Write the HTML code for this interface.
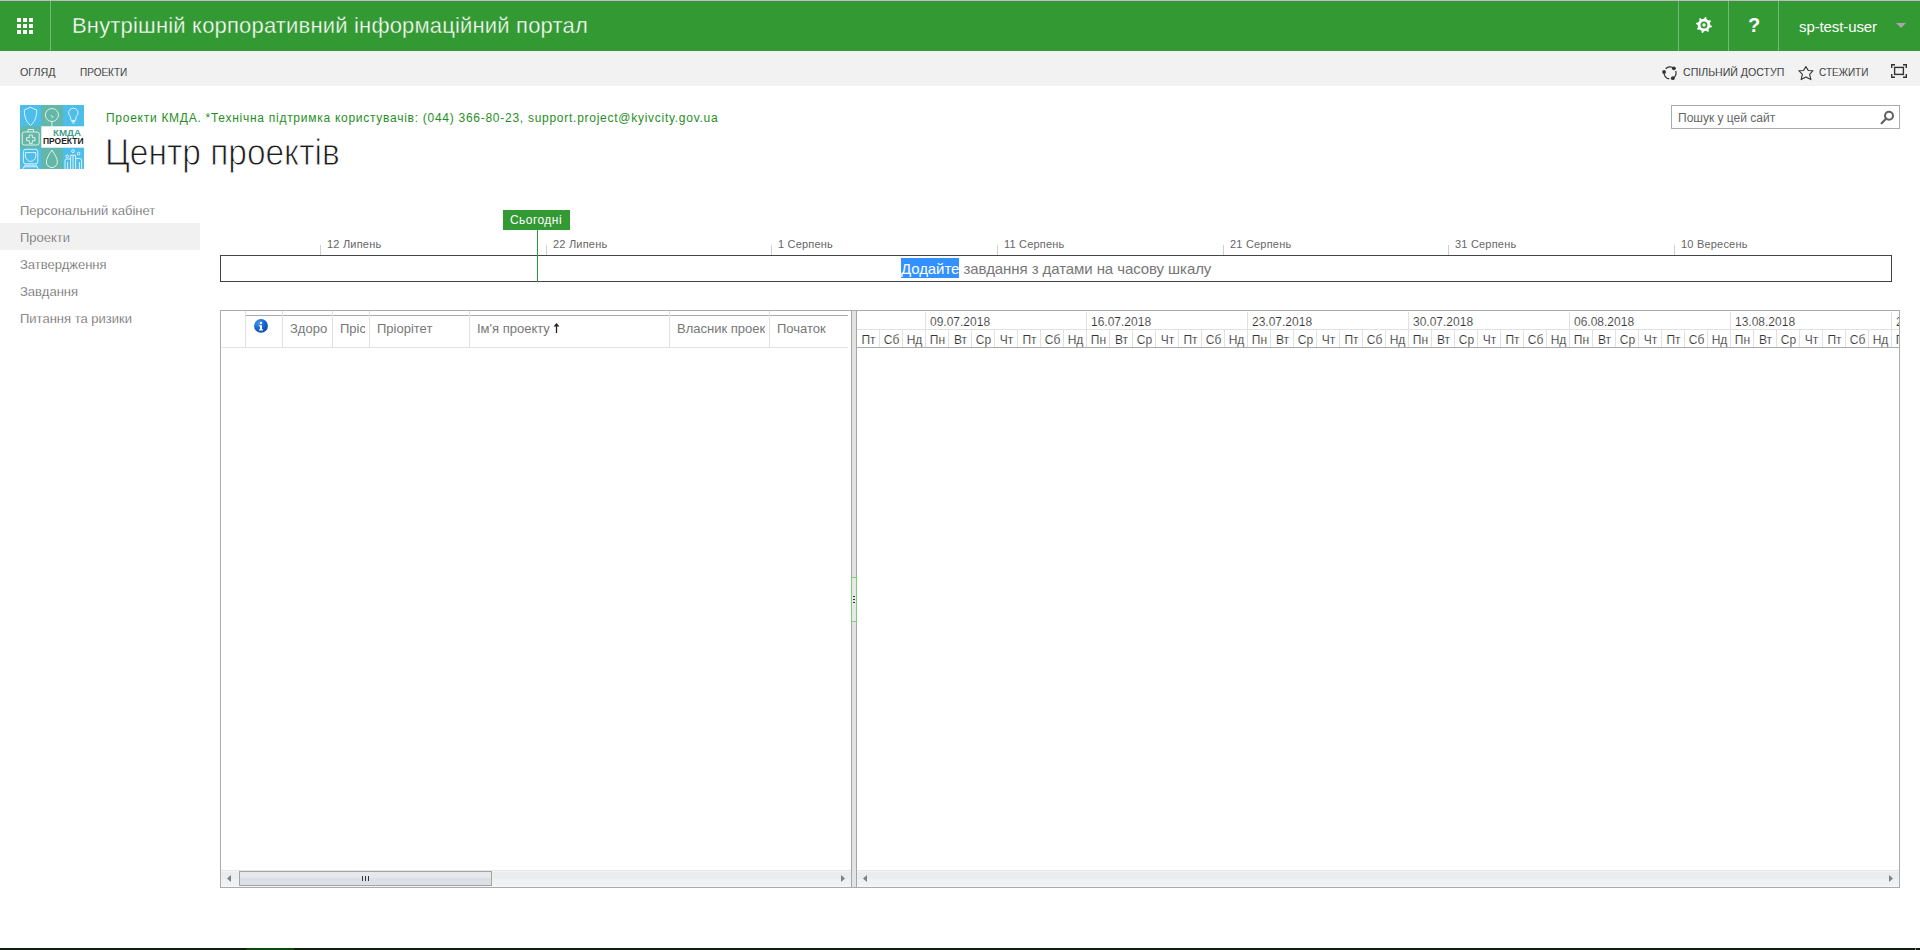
<!DOCTYPE html>
<html><head><meta charset="utf-8">
<style>
*{box-sizing:border-box;margin:0;padding:0}
html,body{width:1920px;height:950px;overflow:hidden;background:#fff;font-family:"Liberation Sans",sans-serif;position:relative}
.a{position:absolute;white-space:nowrap}
#topline{left:0;top:0;width:1920px;height:1px;background:#c3bac6}
#suite{left:0;top:1px;width:1920px;height:50px;background:#339933}
.sep{top:1px;width:1px;height:50px;background:#73b873}
.wf{width:4px;height:4px;background:#fff}
#nav{left:0;top:51px;width:1920px;height:35px;background:#f2f2f2}
.cap{font-size:11.5px;color:#222;transform-origin:0 0;-webkit-text-stroke:.12px #f2f2f2}
.ql{font-size:13px;color:#555;left:20px;-webkit-text-stroke:.25px #fff}
.tl-lbl{font-size:11px;color:#666;top:238px;letter-spacing:.2px}
.tick{width:1px;height:10px;background:#cfcfcf;top:245px}
.hdr{font-size:13px;color:#777;top:321px}
.csep{width:1px;background:#e1e1e1;top:311px;height:37px}
.dsep{width:1px;background:#e1e1e1;top:330px;height:17px}
.wsep{width:1px;background:#e1e1e1;top:312px;height:18px}
.day{font-size:12px;color:#333;top:333px;width:23px;text-align:center;margin-left:1px;-webkit-text-stroke:.15px #fff}
.wk{font-size:12px;color:#333;top:315px;-webkit-text-stroke:.15px #fff}
</style></head><body>
<div class="a" id="topline"></div>
<div class="a" id="suite"></div>
<!-- waffle -->
<div class="a wf" style="left:17px;top:18px"></div><div class="a wf" style="left:23px;top:18px"></div><div class="a wf" style="left:29px;top:18px"></div>
<div class="a wf" style="left:17px;top:24px"></div><div class="a wf" style="left:23px;top:24px"></div><div class="a wf" style="left:29px;top:24px"></div>
<div class="a wf" style="left:17px;top:30px"></div><div class="a wf" style="left:23px;top:30px"></div><div class="a wf" style="left:29px;top:30px"></div>
<div class="a sep" style="left:50px"></div>
<div class="a" style="left:72px;top:13px;font-size:22px;color:#fff;letter-spacing:.18px;-webkit-text-stroke:.35px #339933">Внутрішній корпоративний інформаційний портал</div>
<div class="a sep" style="left:1678px"></div>
<div class="a sep" style="left:1728px"></div>
<div class="a sep" style="left:1778px"></div>
<!-- gear -->
<svg class="a" style="left:1696px;top:17px" width="16" height="16" viewBox="0 0 16 16">
<path fill="#fff" d="M14.30 8.08 L15.93 9.04 L15.67 10.27 L13.79 10.49 L12.40 12.51 L12.87 14.35 L11.82 15.03 L10.33 13.85 L7.92 14.30 L6.96 15.93 L5.73 15.67 L5.51 13.79 L3.49 12.40 L1.65 12.87 L0.97 11.82 L2.15 10.33 L1.70 7.92 L0.07 6.96 L0.33 5.73 L2.21 5.51 L3.60 3.49 L3.13 1.65 L4.18 0.97 L5.67 2.15 L8.08 1.70 L9.04 0.07 L10.27 0.33 L10.49 2.21 L12.51 3.60 L14.35 3.13 L15.03 4.18 L13.85 5.67Z"/><circle cx="8" cy="8" r="2.6" fill="none" stroke="#339933" stroke-width="1.8"/>
</svg>
<div class="a" style="left:1748px;top:14px;font-size:20px;font-weight:bold;color:#fff">?</div>
<div class="a" style="left:1799px;top:18px;font-size:15px;color:#fff;letter-spacing:-.1px">sp-test-user</div>
<svg class="a" style="left:1896px;top:23px" width="10" height="5" viewBox="0 0 10 5"><path d="M0 0h10L5 5z" fill="#aaa6ac"/></svg>

<div class="a" id="nav"></div>
<div class="a cap" style="left:20px;top:66px;transform:scaleX(.93)">ОГЛЯД</div>
<div class="a cap" style="left:80px;top:66px;transform:scaleX(.87)">ПРОЕКТИ</div>
<!-- share icon -->
<svg class="a" style="left:1662px;top:65px" width="16" height="16" viewBox="0 0 16 16">
<path d="M7.27 13.86A6.0 6.0 0 0 1 2.07 6.96 M3.68 3.73A6.0 6.0 0 0 1 11.86 3.30 M13.71 6.05A6.0 6.0 0 0 1 10.82 13.20" fill="none" stroke="#333" stroke-width="1.2"/><circle cx="10.82" cy="13.20" r="1.9" fill="#333"/><circle cx="2.07" cy="6.96" r="1.9" fill="#333"/><circle cx="11.86" cy="3.30" r="1.9" fill="#333"/>
</svg>
<div class="a cap" style="left:1683px;top:66px;transform:scaleX(.92)">СПІЛЬНИЙ ДОСТУП</div>
<svg class="a" style="left:1797px;top:65px" width="18" height="17" viewBox="0 0 18 17">
<path d="M8.9 1.6L11.3 5.5L16 5.7L12.6 9.4L13.9 14.6L8.9 12L4.1 14.6L5.4 9.4L1.8 5.7L6.5 5.5Z" fill="none" stroke="#333" stroke-width="1.1" stroke-linejoin="round"/>
</svg>
<div class="a cap" style="left:1819px;top:66px;transform:scaleX(.87)">СТЕЖИТИ</div>
<svg class="a" style="left:1890px;top:63px" width="18" height="16" viewBox="0 0 18 16">
<g fill="none" stroke="#333" stroke-width="1.4"><path d="M1.7 5V1.7H5M13 1.7h3.3V5M16.3 11v3.3H13M5 14.3H1.7V11"/><rect x="4.6" y="4.4" width="8.8" height="7"/></g>
</svg>

<!-- logo -->
<svg class="a" style="left:20px;top:105px" width="64" height="64" viewBox="0 0 64 64">
<rect x="0" y="0" width="64" height="64" fill="#4dbde9"/>
<rect x="21.3" y="0" width="21.4" height="21.3" fill="#62b7a6"/>
<rect x="0" y="21.3" width="21.3" height="21.4" fill="#62b7a6"/>
<rect x="21.3" y="42.7" width="21.4" height="21.3" fill="#62b7a6"/>
<rect x="21.3" y="21.3" width="42.7" height="21.4" fill="#fff"/>
<g fill="none" stroke="#fff" stroke-width=".8">
<path d="M10.5 2.3l6.2 2.7c0 7-2 12-6.2 15.4C6.3 17 4.3 12 4.3 5z"/>
<circle cx="31.9" cy="10" r="6.5"/><path d="M31.9 16.5v5M31.9 13l1.5-2M31.9 11.5l-1-1.5"/>
<path d="M53.3 3.2a4.6 4.6 0 0 1 3 8.2l-.8 4h-4.4l-.8-4a4.6 4.6 0 0 1 3-8.2zM51.5 16.5h3.6M51.8 18h3"/>
<rect x="2.2" y="27" width="17" height="13" rx="2"/><path d="M8 27v-2.5h5.5V27M9.3 30h3v2.7h2.7v3h-2.7v2.7h-3v-2.7H6.6v-3h2.7z"/>
<path d="M6 44.3h9.6a2.4 2.4 0 0 1 2.2 2.2v10.3a2 2 0 0 1-2 2H5.4a2 2 0 0 1-2-2V46.5a2.4 2.4 0 0 1 2.6-2.2zM5.4 47.6h10.4v4.2c-1 2.6-2.8 4.6-5.2 4.6s-4.2-2-5.2-4.6zM4.2 60.2h12.8M3.6 61.8h14M2.6 64l1.8-2.4M18.6 64l-1.8-2.4"/>
<path d="M31.9 45c3 4.5 5.5 8.5 5.5 12a5.5 5.5 0 0 1-11 0c0-3.5 2.5-7.5 5.5-12z"/>
<circle cx="53" cy="46.2" r="1.4"/><circle cx="47.2" cy="51.3" r="1.3"/><circle cx="58.6" cy="48.6" r="1.3"/><path d="M50.6 64V50.2h5v13.8M45 64V55.8a1.8 1.8 0 0 1 1.8-1.8h3.8M56 53.5h3.8a1.8 1.8 0 0 1 1.8 1.8V64M53 50.2V64M47.6 57v7M59.4 57v7"/>
</g>
<text x="33" y="30.8" font-family="Liberation Sans" font-weight="bold" font-size="9.5" fill="#45a08e" textLength="28" lengthAdjust="spacingAndGlyphs">КМДА</text>
<text x="23" y="39.2" font-family="Liberation Sans" font-weight="bold" font-size="8.4" fill="#222" textLength="40.5" lengthAdjust="spacingAndGlyphs">ПРОЕКТИ</text>
</svg>
<div class="a" style="left:106px;top:111px;font-size:12px;color:#1f8f1f;letter-spacing:.73px">Проекти КМДА. *Технічна підтримка користувачів: (044) 366-80-23, support.project@kyivcity.gov.ua</div>
<div class="a" style="left:105px;top:132px;font-size:36px;color:#1a1a1a;-webkit-text-stroke:.9px #fff;transform-origin:0 0;transform:scaleX(.93)">Центр проектів</div>
<!-- search -->
<div class="a" style="left:1671px;top:105px;width:229px;height:24px;border:1px solid #ababab;background:#fff"></div>
<div class="a" style="left:1678px;top:111px;font-size:12px;color:#666">Пошук у цей сайт</div>
<svg class="a" style="left:1880px;top:110px" width="15" height="15" viewBox="0 0 15 15">
<circle cx="9" cy="5.7" r="4" fill="none" stroke="#606060" stroke-width="2"/><path d="M6.3 8.5L1.6 13.2" stroke="#606060" stroke-width="2.2" stroke-linecap="round"/>
</svg>
<!-- quick launch -->
<div class="a" style="left:0;top:223px;width:200px;height:27px;background:#f1f1f1"></div>
<div class="a ql" style="top:203px">Персональний кабінет</div>
<div class="a ql" style="top:230px">Проекти</div>
<div class="a ql" style="top:257px">Затвердження</div>
<div class="a ql" style="top:284px">Завдання</div>
<div class="a ql" style="top:311px">Питання та ризики</div>

<!-- timeline -->
<div class="a tick" style="left:320px"></div><div class="a tl-lbl" style="left:327px">12 Липень</div>
<div class="a tick" style="left:546px"></div><div class="a tl-lbl" style="left:553px">22 Липень</div>
<div class="a tick" style="left:771px"></div><div class="a tl-lbl" style="left:778px">1 Серпень</div>
<div class="a tick" style="left:997px"></div><div class="a tl-lbl" style="left:1004px">11 Серпень</div>
<div class="a tick" style="left:1223px"></div><div class="a tl-lbl" style="left:1230px">21 Серпень</div>
<div class="a tick" style="left:1448px"></div><div class="a tl-lbl" style="left:1455px">31 Серпень</div>
<div class="a tick" style="left:1674px"></div><div class="a tl-lbl" style="left:1681px">10 Вересень</div>
<div class="a" style="left:220px;top:255px;width:1672px;height:27px;border:1px solid #444"></div>
<div class="a" style="left:503px;top:210px;width:67px;height:20px;background:#339933"></div>
<div class="a" style="left:510px;top:213px;font-size:12px;color:#fff;letter-spacing:.45px">Сьогодні</div>
<div class="a" style="left:537px;top:230px;width:1px;height:52px;background:#339933"></div>
<div class="a" style="left:901px;top:258px;width:58px;height:20px;background:#3390ff"></div>
<div class="a" style="left:901px;top:260px;font-size:15px;color:#777;letter-spacing:-.08px"><span style="color:#fff">Додайте</span> завдання з датами на часову шкалу</div>

<!-- grid -->
<div class="a" style="left:220px;top:310px;width:1680px;height:578px;border:1px solid #ababab"></div>
<div class="a" style="left:246px;top:315px;width:602px;height:1px;background:#a9a9a9"></div>
<div class="a" style="left:221px;top:347px;width:627px;height:1px;background:#e1e1e1"></div>
<div class="a csep" style="left:245px"></div><div class="a csep" style="left:282px"></div><div class="a csep" style="left:332px"></div><div class="a csep" style="left:369px"></div><div class="a csep" style="left:469px"></div><div class="a csep" style="left:669px"></div><div class="a csep" style="left:769px"></div>
<svg class="a" style="left:254px;top:319px" width="14" height="14" viewBox="0 0 14 14">
<defs><radialGradient id="ig" cx="35%" cy="30%" r="75%"><stop offset="0" stop-color="#4c96ea"/><stop offset=".55" stop-color="#1466d2"/><stop offset="1" stop-color="#0b4aa8"/></radialGradient></defs>
<circle cx="7" cy="6.9" r="6.9" fill="url(#ig)"/><rect x="6" y="2.9" width="2" height="2" fill="#fff"/><path d="M5 6.2h3v4.1h1v1.2H5v-1.2h1V7.3H5z" fill="#fff"/>
</svg>
<div class="a hdr" style="left:290px;width:38px;overflow:hidden">Здоровʼя</div>
<div class="a hdr" style="left:340px;width:25px;overflow:hidden">Прісвоєно</div>
<div class="a hdr" style="left:377px">Пріорітет</div>
<div class="a hdr" style="left:477px">Ім'я проекту</div>
<svg class="a" style="left:553px;top:323px" width="7" height="10" viewBox="0 0 7 10"><path d="M3.5 1.5V10" stroke="#222" stroke-width="1.3"/><path d="M3.5 0L6.5 3.6H.5z" fill="#222"/></svg>
<div class="a hdr" style="left:677px;width:88px;overflow:hidden">Власник проекту</div>
<div class="a hdr" style="left:777px">Початок</div>
<!-- splitter -->
<div class="a" style="left:851px;top:311px;width:6px;height:576px;background:#e3e3e3;border-left:1px solid #a6a6a6;border-right:1px solid #a6a6a6"></div>
<div class="a" style="left:851px;top:577px;width:6px;height:45px;border:1px solid #78d178;background:#e8e8e8"></div>
<div class="a" style="left:853px;top:596px;width:2px;height:1px;background:#333"></div>
<div class="a" style="left:853px;top:599px;width:2px;height:1px;background:#333"></div>
<div class="a" style="left:853px;top:602px;width:2px;height:1px;background:#333"></div>
<!-- gantt header -->
<div class="a" style="left:857px;top:329px;width:1042px;height:1px;background:#e1e1e1"></div>
<div class="a" style="left:857px;top:347px;width:1042px;height:1px;background:#ababab"></div>
<div class="a day" style="left:856px">Пт</div><div class="a dsep" style="left:879px"></div><div class="a day" style="left:879px">Сб</div><div class="a dsep" style="left:902px"></div><div class="a day" style="left:902px">Нд</div><div class="a dsep" style="left:925px"></div><div class="a day" style="left:925px">Пн</div><div class="a dsep" style="left:948px"></div><div class="a day" style="left:948px">Вт</div><div class="a dsep" style="left:971px"></div><div class="a day" style="left:971px">Ср</div><div class="a dsep" style="left:994px"></div><div class="a day" style="left:994px">Чт</div><div class="a dsep" style="left:1017px"></div><div class="a day" style="left:1017px">Пт</div><div class="a dsep" style="left:1040px"></div><div class="a day" style="left:1040px">Сб</div><div class="a dsep" style="left:1063px"></div><div class="a day" style="left:1063px">Нд</div><div class="a dsep" style="left:1086px"></div><div class="a day" style="left:1086px">Пн</div><div class="a dsep" style="left:1109px"></div><div class="a day" style="left:1109px">Вт</div><div class="a dsep" style="left:1132px"></div><div class="a day" style="left:1132px">Ср</div><div class="a dsep" style="left:1155px"></div><div class="a day" style="left:1155px">Чт</div><div class="a dsep" style="left:1178px"></div><div class="a day" style="left:1178px">Пт</div><div class="a dsep" style="left:1201px"></div><div class="a day" style="left:1201px">Сб</div><div class="a dsep" style="left:1224px"></div><div class="a day" style="left:1224px">Нд</div><div class="a dsep" style="left:1247px"></div><div class="a day" style="left:1247px">Пн</div><div class="a dsep" style="left:1270px"></div><div class="a day" style="left:1270px">Вт</div><div class="a dsep" style="left:1293px"></div><div class="a day" style="left:1293px">Ср</div><div class="a dsep" style="left:1316px"></div><div class="a day" style="left:1316px">Чт</div><div class="a dsep" style="left:1339px"></div><div class="a day" style="left:1339px">Пт</div><div class="a dsep" style="left:1362px"></div><div class="a day" style="left:1362px">Сб</div><div class="a dsep" style="left:1385px"></div><div class="a day" style="left:1385px">Нд</div><div class="a dsep" style="left:1408px"></div><div class="a day" style="left:1408px">Пн</div><div class="a dsep" style="left:1431px"></div><div class="a day" style="left:1431px">Вт</div><div class="a dsep" style="left:1454px"></div><div class="a day" style="left:1454px">Ср</div><div class="a dsep" style="left:1477px"></div><div class="a day" style="left:1477px">Чт</div><div class="a dsep" style="left:1500px"></div><div class="a day" style="left:1500px">Пт</div><div class="a dsep" style="left:1523px"></div><div class="a day" style="left:1523px">Сб</div><div class="a dsep" style="left:1546px"></div><div class="a day" style="left:1546px">Нд</div><div class="a dsep" style="left:1569px"></div><div class="a day" style="left:1569px">Пн</div><div class="a dsep" style="left:1592px"></div><div class="a day" style="left:1592px">Вт</div><div class="a dsep" style="left:1615px"></div><div class="a day" style="left:1615px">Ср</div><div class="a dsep" style="left:1638px"></div><div class="a day" style="left:1638px">Чт</div><div class="a dsep" style="left:1661px"></div><div class="a day" style="left:1661px">Пт</div><div class="a dsep" style="left:1684px"></div><div class="a day" style="left:1684px">Сб</div><div class="a dsep" style="left:1707px"></div><div class="a day" style="left:1707px">Нд</div><div class="a dsep" style="left:1730px"></div><div class="a day" style="left:1730px">Пн</div><div class="a dsep" style="left:1753px"></div><div class="a day" style="left:1753px">Вт</div><div class="a dsep" style="left:1776px"></div><div class="a day" style="left:1776px">Ср</div><div class="a dsep" style="left:1799px"></div><div class="a day" style="left:1799px">Чт</div><div class="a dsep" style="left:1822px"></div><div class="a day" style="left:1822px">Пт</div><div class="a dsep" style="left:1845px"></div><div class="a day" style="left:1845px">Сб</div><div class="a dsep" style="left:1868px"></div><div class="a day" style="left:1868px">Нд</div><div class="a dsep" style="left:1891px"></div><div class="a day" style="left:1891px">Пн</div><div class="a wsep" style="left:925px"></div><div class="a wk" style="left:930px">09.07.2018</div><div class="a wsep" style="left:1086px"></div><div class="a wk" style="left:1091px">16.07.2018</div><div class="a wsep" style="left:1247px"></div><div class="a wk" style="left:1252px">23.07.2018</div><div class="a wsep" style="left:1408px"></div><div class="a wk" style="left:1413px">30.07.2018</div><div class="a wsep" style="left:1569px"></div><div class="a wk" style="left:1574px">06.08.2018</div><div class="a wsep" style="left:1730px"></div><div class="a wk" style="left:1735px">13.08.2018</div><div class="a wsep" style="left:1891px"></div><div class="a wk" style="left:1896px">20.08.2018</div>
<div class="a" style="left:1899px;top:311px;width:21px;height:40px;background:#fff"></div>
<div class="a" style="left:1899px;top:310px;width:1px;height:578px;background:#ababab"></div>
<!-- scrollbars -->
<div class="a" style="left:221px;top:870px;width:630px;height:17px;background:linear-gradient(#e5e6e9 0,#e5e6e9 1px,#f2f3f5 1px,#f2f3f5 2px,#ebecee 2px,#ebecee 9px,#f0f1f3 9px,#f0f1f3 15px,#f4f5f7 15px)"></div>
<div class="a" style="left:857px;top:870px;width:1042px;height:17px;background:linear-gradient(#e5e6e9 0,#e5e6e9 1px,#f2f3f5 1px,#f2f3f5 2px,#ebecee 2px,#ebecee 9px,#f0f1f3 9px,#f0f1f3 15px,#f4f5f7 15px)"></div>
<svg class="a" style="left:226px;top:875px" width="6" height="8"><path d="M5 0v7L1 3.5z" fill="#7f7f7f"/></svg>
<svg class="a" style="left:840px;top:875px" width="6" height="8"><path d="M1 0v7l4-3.5z" fill="#7f7f7f"/></svg>
<svg class="a" style="left:862px;top:875px" width="6" height="8"><path d="M5 0v7L1 3.5z" fill="#7f7f7f"/></svg>
<svg class="a" style="left:1888px;top:875px" width="6" height="8"><path d="M1 0v7l4-3.5z" fill="#7f7f7f"/></svg>
<div class="a" style="left:239px;top:871px;width:253px;height:15px;border:1px solid #a3a3a3;background:linear-gradient(#e6e8ec 0,#e6e8ec 50%,#dcdfe5 50%)"></div>
<div class="a" style="left:362px;top:876px;width:1px;height:5px;background:#333"></div>
<div class="a" style="left:365px;top:876px;width:1px;height:5px;background:#333"></div>
<div class="a" style="left:368px;top:876px;width:1px;height:5px;background:#333"></div>
<div class="a" style="left:0;top:948px;width:1920px;height:2px;background:#0b1f0b"></div>
<div class="a" style="left:246px;top:948px;width:48px;height:2px;background:#0b4a0b"></div>
<div class="a" style="left:1915px;top:948px;width:1px;height:2px;background:#888"></div>

</body></html>
